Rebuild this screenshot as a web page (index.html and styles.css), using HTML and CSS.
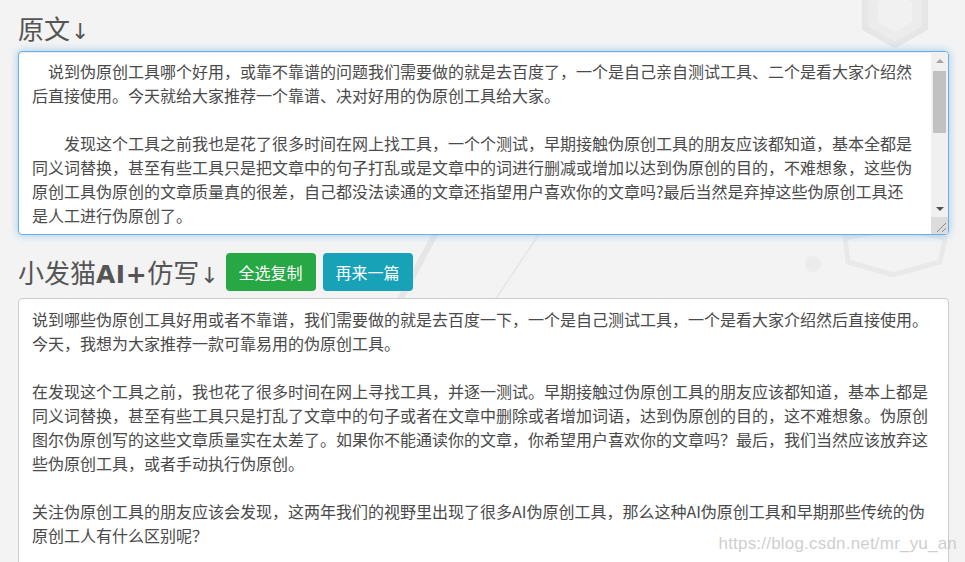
FILE: index.html
```html
<!DOCTYPE html>
<html lang="zh-CN">
<head>
<meta charset="utf-8">
<title>小发猫AI+仿写</title>
<link rel="stylesheet" href="styles.css">
</head>
<body>
<svg class="bg-deco" width="965" height="562" viewBox="0 0 965 562" aria-hidden="true">
  <polygon points="895,-22 925,-5 925,28 895,45 865,28 865,-5" fill="#ececec" stroke="#e6e6e6" stroke-width="6"/>
  <polygon points="895,-8 912,2 912,22 895,32 878,22 878,2" fill="#f1f1f1"/>
  <line x1="545" y1="225" x2="495" y2="300" stroke="#e8e8e8" stroke-width="2"/>
  <line x1="440" y1="225" x2="400" y2="300" stroke="#e6e6e6" stroke-width="6"/>
  <polygon points="845,238 895,228 945,238 940,262 893,275 848,262" fill="none" stroke="#e9e9e9" stroke-width="5"/>
  <circle cx="813" cy="264" r="8" fill="#ececec"/>
</svg>
<main class="page">
  <h2 class="title">原文<span class="arrow">↓</span></h2>
  <div class="editor">
    <div class="editor-text">
      <p class="line">　说到伪原创工具哪个好用，或靠不靠谱的问题我们需要做的就是去百度了，一个是自己亲自测试工具、二个是看大家介绍然</p>
      <p class="line">后直接使用。今天就给大家推荐一个靠谱、决对好用的伪原创工具给大家。</p>
      <p class="line">&nbsp;</p>
      <p class="line">　　发现这个工具之前我也是花了很多时间在网上找工具，一个个测试，早期接触伪原创工具的朋友应该都知道，基本全都是</p>
      <p class="line">同义词替换，甚至有些工具只是把文章中的句子打乱或是文章中的词进行删减或增加以达到伪原创的目的，不难想象，这些伪</p>
      <p class="line">原创工具伪原创的文章质量真的很差，自己都没法读通的文章还指望用户喜欢你的文章吗?最后当然是弃掉这些伪原创工具还</p>
      <p class="line">是人工进行伪原创了。</p>
      <p class="line">&nbsp;</p>
      <p class="line">　　关注伪原创工具的朋友应该会发现，这两年我们的视野里出现了很多AI伪原创工具。</p>
    </div>
    <div class="scrollbar">
      <div class="sb-btn"><span class="tri tri-up"></span></div>
      <div class="sb-track"><div class="sb-thumb"></div></div>
      <div class="sb-btn"><span class="tri tri-down"></span></div>
      <div class="sb-corner">
        <svg width="17" height="17" viewBox="0 0 17 17"><path d="M15 6 L6 15 M15 11 L11 15" stroke="#8a8a8a" stroke-width="1" fill="none"/></svg>
      </div>
    </div>
  </div>

  <div class="result-head">
    <h2 class="title">小发猫<span class="latin">AI+</span>仿写<span class="arrow">↓</span></h2>
    <button class="btn btn-green" type="button">全选复制</button>
    <button class="btn btn-teal" type="button">再来一篇</button>
  </div>

  <div class="result">
    <p class="line">说到哪些伪原创工具好用或者不靠谱，我们需要做的就是去百度一下，一个是自己测试工具，一个是看大家介绍然后直接使用。</p>
    <p class="line">今天，我想为大家推荐一款可靠易用的伪原创工具。</p>
    <p class="line">&nbsp;</p>
    <p class="line">在发现这个工具之前，我也花了很多时间在网上寻找工具，并逐一测试。早期接触过伪原创工具的朋友应该都知道，基本上都是</p>
    <p class="line">同义词替换，甚至有些工具只是打乱了文章中的句子或者在文章中删除或者增加词语，达到伪原创的目的，这不难想象。伪原创</p>
    <p class="line">图尔伪原创写的这些文章质量实在太差了。如果你不能通读你的文章，你希望用户喜欢你的文章吗？最后，我们当然应该放弃这</p>
    <p class="line">些伪原创工具，或者手动执行伪原创。</p>
    <p class="line">&nbsp;</p>
    <p class="line">关注伪原创工具的朋友应该会发现，这两年我们的视野里出现了很多AI伪原创工具，那么这种AI伪原创工具和早期那些传统的伪</p>
    <p class="line">原创工人有什么区别呢？</p>
  </div>
</main>
<div class="watermark">https://blog.csdn.net/mr_yu_an</div>
</body>
</html>
```
FILE: styles.css
```css
html, body {
  margin: 0;
  padding: 0;
}
body {
  width: 965px;
  height: 562px;
  overflow: hidden;
  background: #f3f3f3;
  font-family: "Noto Sans CJK SC", "Microsoft YaHei", sans-serif;
  color: #555;
  position: relative;
}
.bg-deco {
  position: absolute;
  left: 0;
  top: 0;
  z-index: 0;
}
.page {
  position: relative;
  z-index: 1;
  padding: 9px 16px 0 18px;
  display: flex;
  flex-direction: column;
}
.title {
  margin: 0;
  height: 38px;
  font-size: 26px;
  line-height: 38px;
  font-weight: normal;
  color: #555;
  white-space: nowrap;
  flex: none;
}
.arrow {
  display: inline-block;
  font-family: "DejaVu Sans", sans-serif;
  font-size: 22px;
  line-height: 1;
  margin-left: 1px;
}
.latin {
  font-family: "DejaVu Sans", sans-serif;
  font-weight: bold;
  font-size: 25px;
  letter-spacing: 0.5px;
}
.editor {
  margin-top: 4px;
  height: 184px;
  box-sizing: border-box;
  background: #fff;
  border: 1px solid #66afe9;
  border-radius: 4px;
  box-shadow: inset 0 1px 1px rgba(0,0,0,.075), 0 0 8px rgba(102,175,233,.6);
  display: flex;
  overflow: hidden;
}
.editor-text {
  flex: 1;
  padding: 7px 0 0 13px;
  overflow: hidden;
}
.line {
  margin: 0;
  font-size: 16px;
  line-height: 24px;
  white-space: nowrap;
  color: #4a4a4a;
}
.scrollbar {
  width: 17px;
  display: flex;
  flex-direction: column;
  background: #f0f0f0;
}
.sb-btn {
  height: 17px;
  display: flex;
  align-items: center;
  justify-content: center;
}
.tri {
  width: 0;
  height: 0;
  border-left: 4px solid transparent;
  border-right: 4px solid transparent;
}
.tri-up {
  border-bottom: 4px solid #a3a3a3;
}
.tri-down {
  border-top: 4px solid #505050;
}
.sb-track {
  flex: 1;
  padding: 2px 2px 0 2px;
}
.sb-thumb {
  height: 62px;
  background: #c1c1c1;
}
.sb-corner {
  height: 17px;
  background: #dcdcdc;
}
.sb-corner svg {
  display: block;
}
.result-head {
  margin-top: 18px;
  display: flex;
  align-items: center;
  height: 38px;
}
.btn {
  flex: none;
  display: flex;
  align-items: center;
  justify-content: center;
  height: 38px;
  width: 90px;
  border: 0;
  border-radius: 4px;
  color: #fff;
  font-family: "Noto Sans CJK SC", sans-serif;
  font-size: 16px;
  line-height: normal;
  padding: 0;
}
.btn-green {
  margin-left: 7px;
  background: #28a745;
}
.btn-teal {
  margin-left: 7px;
  background: #17a2b8;
}
.result {
  margin-top: 7px;
  height: 300px;
  box-sizing: border-box;
  background: #fff;
  border: 1px solid #ccc;
  border-radius: 4px;
  padding: 8px 0 0 13px;
  overflow: hidden;
}
.watermark {
  position: absolute;
  right: 8px;
  bottom: 8px;
  z-index: 2;
  font-family: "Liberation Sans", Arial, sans-serif;
  font-size: 17px;
  color: rgba(190,190,190,.75);
  letter-spacing: 0.2px;
}
```
